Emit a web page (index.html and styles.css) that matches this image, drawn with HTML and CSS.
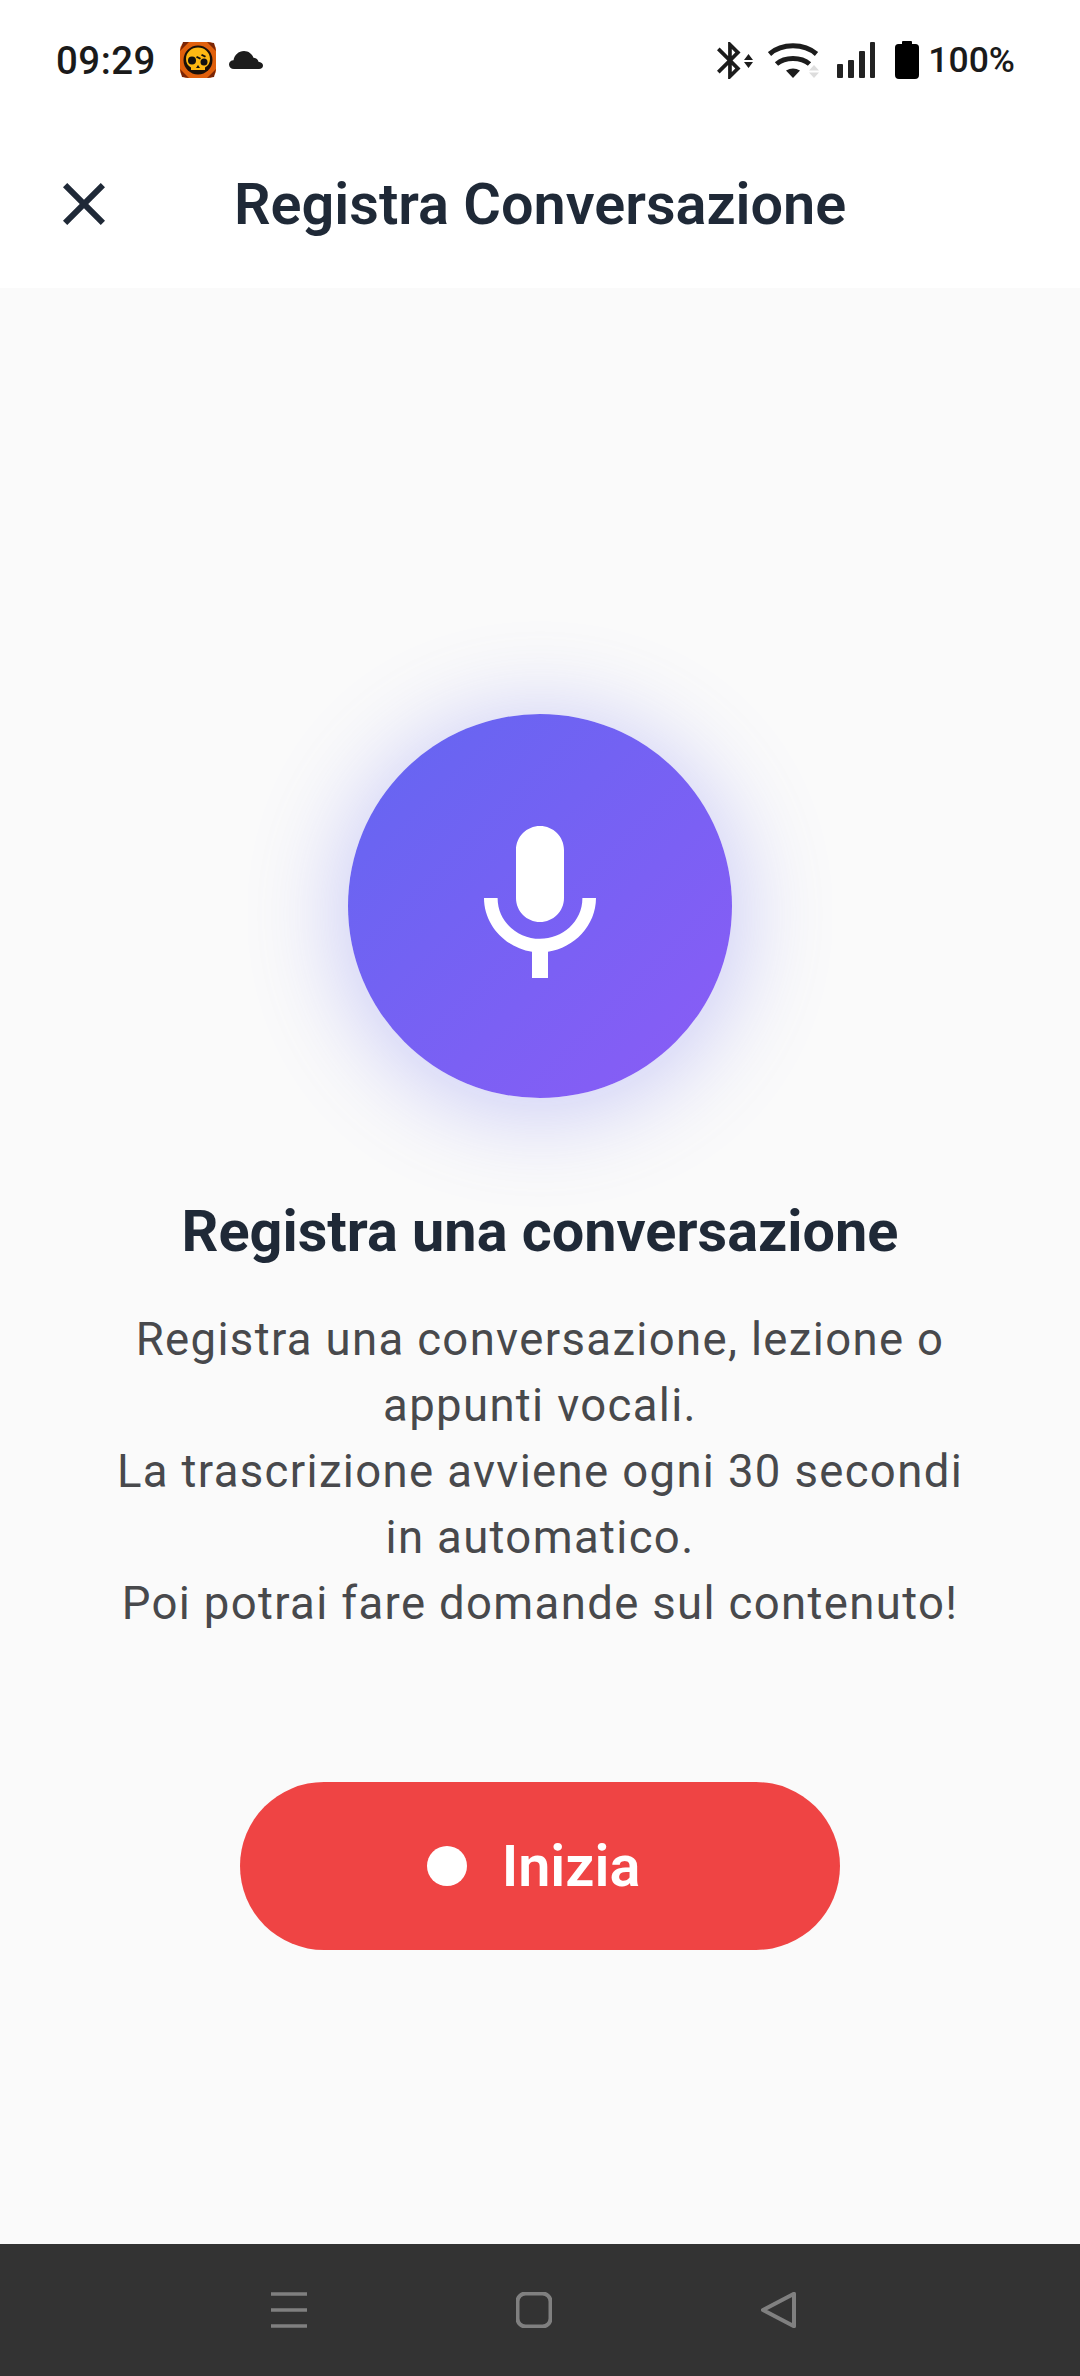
FILE: index.html
```html
<!DOCTYPE html>
<html lang="it">
<head>
    <meta charset="UTF-8">
    <title>Registra Conversazione</title>
    <link rel="stylesheet" href="styles.css">
</head>
<body>
    <div class="page">
        <div class="status-bar">
            <span class="clock">09:29</span>
            <svg class="app-badge" viewBox="0 0 36 36">
                <rect width="36" height="36" rx="8" fill="#e0600c"/>
                <path d="M0 9 L9 0 L3 0Z M36 9 L27 0 L34 1Z M0 27 L9 36 L2 35Z M36 27 L27 36 L34 35Z" fill="#7a2506"/>
                <circle cx="18" cy="18" r="14.500" fill="#1a1008"/>
                <path d="M18 5.500c6.400 0 12 4.800 12 11.400 0 4-2 6.800-5 8.600v2.500H11v-2.500c-3-1.800-5-4.600-5-8.600C6 10.300 11.600 5.500 18 5.500z" fill="#fdb913"/>
                <circle cx="12" cy="18.500" r="4" fill="#111"/>
                <circle cx="24" cy="20" r="3.500" fill="#111"/>
                <path d="M17 14l4 2-1 1.500-4-2zM22 12l4 2-1 1.500-4-2z" fill="#111"/>
                <path d="M18 23l2 3h-4z" fill="#111"/>
            </svg>
            <svg class="cloud" viewBox="0 0 34 18">
                <path d="M5 18C2 18 0 16 0 13.500 0 11 2 9.200 4.500 9.200 5.500 4 9.500 0 15 0c4.500 0 8 2.800 9.500 6.800C27 6.800 29 8.500 29.500 10.800 32 11 34 12.500 34 14.500 34 16.500 32.500 18 30 18z" fill="#1c1c1c"/>
            </svg>
            <div class="status-right">
                <svg class="ic-bluetooth" viewBox="0 0 36 37">
                    <path transform="scale(1.85) translate(-5 -2)" d="M17.710 7.710L12 2h-1v7.590L6.410 5 5 6.410 10.590 12 5 17.590 6.410 19 11 14.410V22h1l5.710-5.710-4.300-4.290 4.300-4.290zM13 5.830l1.880 1.880L13 9.590V5.830zm1.880 10.460L13 18.170v-3.760l1.880 1.880z" fill="#1c1c1c"/>
                    <path d="M27 18l4.500-6 4.500 6zM27 20l4.500 6 4.500-6z" fill="#1c1c1c"/>
                </svg>
                <svg class="ic-wifi" viewBox="0 0 51 36">
                    <path d="M1.500 12C14 1 36 1 48.500 12" fill="none" stroke="#1c1c1c" stroke-width="5"/>
                    <path d="M8.500 22C17 14.500 33 14.500 41.500 22" fill="none" stroke="#1c1c1c" stroke-width="5"/>
                    <path d="M25 36l-7-7.500Q25 24.500 32 28.500z" fill="#1c1c1c"/>
                    <path d="M41 28.500l5-5.500 5 5.500zM41 30.500l5 5.500 5-5.500z" fill="#ddd"/>
                </svg>
                <svg class="ic-signal" viewBox="0 0 38 36">
                    <rect x="0" y="22" width="6" height="14" rx="1" fill="#222"/>
                    <rect x="11" y="18" width="6" height="18" rx="1" fill="#222"/>
                    <rect x="22" y="9" width="6" height="27" rx="1" fill="#222"/>
                    <rect x="33" y="0" width="5" height="36" rx="1" fill="#222"/>
                </svg>
                <svg class="ic-battery" viewBox="0 0 24 38">
                    <path d="M8 0h8a1 1 0 0 1 1 1v2h3.500A3.500 3.500 0 0 1 24 6.500V34a4 4 0 0 1-4 4H4a4 4 0 0 1-4-4V6.500A3.500 3.500 0 0 1 3.500 3H7V1a1 1 0 0 1 1-1z" fill="#000"/>
                </svg>
                <span class="battery-pct">100%</span>
            </div>
        </div>

        <div class="header">
            <svg class="close-icon" viewBox="0 0 24 24">
                <path d="M19 6.410L17.590 5 12 10.590 6.410 5 5 6.410 10.590 12 5 17.590 6.410 19 12 13.410 17.590 19 19 17.590 13.410 12z"/>
            </svg>
            <div class="title">Registra Conversazione</div>
        </div>

        <div class="content">
            <div class="mic-circle">
                <svg class="mic-icon" viewBox="0 0 24 24">
                    <path d="M12 14c1.660 0 3-1.340 3-3V5c0-1.660-1.340-3-3-3S9 3.340 9 5v6c0 1.660 1.340 3 3 3zm5.300-3c0 3-2.540 5.100-5.300 5.100S6.700 14 6.700 11H5c0 3.410 2.720 6.230 6 6.720V21h2v-3.280c3.280-.480 6-3.300 6-6.720h-1.700z"/>
                </svg>
            </div>
            <h1 class="heading">Registra una conversazione</h1>
            <p class="description">
                Registra una conversazione, lezione o appunti vocali.<br>
                La trascrizione avviene ogni 30 secondi in automatico.<br>
                Poi potrai fare domande sul contenuto!
            </p>
            <button class="start-button">
                <span class="rec-dot"></span>
                Inizia
            </button>
        </div>

        <div class="nav-bar">
            <svg class="nav-icon" viewBox="0 0 36 36">
                <path d="M0 2h36M0 18h36M0 34h36" stroke-width="3.500" stroke-linecap="round"/>
            </svg>
            <svg class="nav-icon" viewBox="0 0 36 36">
                <rect x="1.500" y="1.500" width="33" height="33" rx="8"/>
            </svg>
            <svg class="nav-icon" viewBox="0 0 36 36">
                <path d="M33 1.800L2 18l31 16.200z" stroke-linejoin="round"/>
            </svg>
        </div>
    </div>
</body>
</html>
```

FILE: styles.css
```css
* {
    box-sizing: border-box;
}

body {
    margin: 0;
    font-family: Roboto, sans-serif;
    background: #fafafa;
}

.page {
    display: flex;
    flex-direction: column;
    width: 1080px;
    height: 2376px;
    overflow: hidden;
}

/* status bar */
.status-bar {
    display: flex;
    align-items: center;
    height: 120px;
    padding: 0 65px 0 56px;
    background: #fff;
    color: #1a1a1a;
}

.clock {
    font-size: 38.4px;
    font-weight: 500;
    letter-spacing: 0.5px;
}

.app-badge {
    width: 36px;
    height: 36px;
    margin-left: 24px;
}

.cloud {
    width: 34px;
    height: 18px;
    margin-left: 13px;
}

.status-right {
    display: flex;
    align-items: center;
    margin-left: auto;
}

.ic-bluetooth {
    width: 36px;
    height: 37px;
}

.ic-wifi {
    width: 51px;
    height: 36px;
    margin-left: 15px;
}

.ic-signal {
    width: 38px;
    height: 36px;
    margin-left: 18px;
}

.ic-battery {
    width: 24px;
    height: 38px;
    margin-left: 20px;
}

.battery-pct {
    margin-left: 9px;
    font-size: 35.5px;
    font-weight: 500;
}

/* app header */
.header {
    display: flex;
    align-items: center;
    height: 168px;
    padding-left: 48px;
    background: #fff;
}

.close-icon {
    width: 72px;
    height: 72px;
    fill: #1f2937;
}

.title {
    margin-left: 114px;
    font-size: 57.6px;
    font-weight: 600;
    color: #1f2937;
}

/* main area */
.content {
    display: flex;
    flex: 1;
    flex-direction: column;
    align-items: center;
    padding: 426px 96px 0;
    background: #fafafa;
}

.mic-circle {
    display: flex;
    align-items: center;
    justify-content: center;
    width: 384px;
    height: 384px;
    border-radius: 50%;
    background: linear-gradient(135deg, #6366f1, #8b5cf6);
    box-shadow: 0 8px 90px 10px rgba(99, 102, 241, 0.3);
}

.mic-icon {
    width: 192px;
    height: 192px;
    fill: #fff;
}

.heading {
    margin: 98px 0 0;
    font-size: 57.6px;
    font-weight: 700;
    line-height: 72px;
    color: #1f2937;
}

.description {
    margin: 39px 0 0;
    font-size: 45.5px;
    line-height: 66px;
    letter-spacing: 1.35px;
    text-align: center;
    color: #48494c;
}

.start-button {
    display: flex;
    align-items: center;
    justify-content: center;
    gap: 35px;
    width: 600px;
    height: 168px;
    margin-top: 145px;
    padding: 0 13px 0 0;
    border: none;
    border-radius: 84px;
    background: #ef4444;
    color: #fff;
    font-family: inherit;
    font-size: 57.6px;
    font-weight: 600;
}

.rec-dot {
    width: 40px;
    height: 40px;
    border-radius: 50%;
    background: #fff;
}

/* system navigation */
.nav-bar {
    display: flex;
    align-items: center;
    gap: 209px;
    height: 132px;
    padding-left: 271px;
    background: #333;
}

.nav-icon {
    width: 36px;
    height: 36px;
    fill: none;
    stroke: #808080;
    stroke-width: 4;
}
```
